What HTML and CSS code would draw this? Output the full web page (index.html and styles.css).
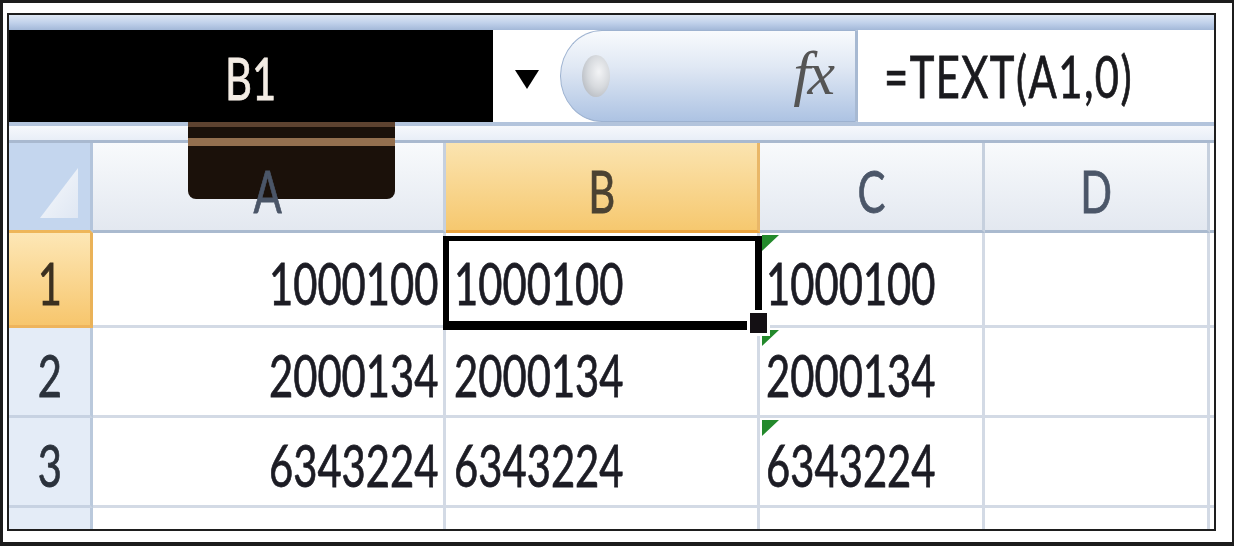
FILE: index.html
```html
<!DOCTYPE html>
<html lang="en">
<head>
<meta charset="utf-8">
<title>Excel TEXT function</title>
<link rel="stylesheet" href="styles.css">
</head>
<body>
<div class="outer">
  <div class="frame">
    <div class="topbar"></div>
    <div class="fbar">
      <div class="namebox"><span class="t tc">B1</span></div>
      <div class="dd"><span class="arrow"></span></div>
      <div class="pill">
        <span class="dot"></span>
        <span class="fx">fx</span>
      </div>
      <div class="formula"><span class="t tl">=TEXT(A1,0)</span></div>
    </div>
    <div class="sep"></div>
    <div class="sheet">
      <div class="c corner"><svg class="tri" width="81" height="87" viewBox="0 0 81 87"><defs><linearGradient id="g" x1="0" y1="0" x2="1" y2="1"><stop offset="0" stop-color="#f7f9fc"/><stop offset="1" stop-color="#dfe7f3"/></linearGradient></defs><polygon points="69,25 69,75 31,75" fill="url(#g)"/></svg></div>
      <div class="c colh"><span class="t tc top">A</span></div>
      <div class="c colh sel"><span class="t tc">B</span></div>
      <div class="c colh"><span class="t tc">C</span></div>
      <div class="c colh"><span class="t tc">D</span></div>
      <div class="c colh pad"></div>

      <div class="c rowh sel"><span class="t tc">1</span></div>
      <div class="c num"><span class="t tr">1000100</span></div>
      <div class="c txt"><span class="t tl">1000100</span></div>
      <div class="c txt ctxt"><i class="err"></i><span class="t tl">1000100</span></div>
      <div class="c"></div>
      <div class="c pad"></div>

      <div class="c rowh"><span class="t tc">2</span></div>
      <div class="c num"><span class="t tr">2000134</span></div>
      <div class="c txt"><span class="t tl">2000134</span></div>
      <div class="c txt ctxt"><i class="err"></i><span class="t tl">2000134</span></div>
      <div class="c"></div>
      <div class="c pad"></div>

      <div class="c rowh"><span class="t tc">3</span></div>
      <div class="c num"><span class="t tr">6343224</span></div>
      <div class="c txt"><span class="t tl">6343224</span></div>
      <div class="c txt ctxt"><i class="err"></i><span class="t tl">6343224</span></div>
      <div class="c"></div>
      <div class="c pad"></div>

      <div class="c rowh last"></div>
      <div class="c last"></div>
      <div class="c last"></div>
      <div class="c last"></div>
      <div class="c last"></div>
      <div class="c pad last"></div>

      <div class="selbox"><i class="handle"></i></div>
    </div>
    <div class="tip"></div>
  </div>
</div>
</body>
</html>
```

FILE: styles.css
```css
* { box-sizing: border-box; margin: 0; padding: 0; }
html, body { width: 1234px; height: 546px; overflow: hidden; background: #fff; }
body { font-family: Lato, "Open Sans", sans-serif; }

.outer {
  width: 1234px; height: 546px;
  border-style: solid; border-color: #1c1c1c;
  border-width: 3px 2px 4px 3px;
  padding: 10px 0 0 4px;
}
.frame {
  position: relative;
  width: 1209px; height: 518px;
  border: 2px solid #1e1e1e;
  display: flex; flex-direction: column;
  background: #fff;
}
.topbar { height: 15px; flex: none; background: linear-gradient(#dfe8f5, #bfd0ea 55%, #a3b8d8); }

.fbar { height: 92px; flex: none; display: flex; }
.namebox {
  flex: none; width: 484px; background: #000; color: #f3ece4;
  display: flex; align-items: center; justify-content: center;
  font-size: 58px; padding-top: 3px;
}
.dd { flex: none; width: 67px; background: #fff; display: flex; align-items: center; justify-content: center; padding-top: 6px; }
.arrow { width: 0; height: 0; border-left: 12px solid transparent; border-right: 12px solid transparent; border-top: 19px solid #000; }
.pill {
  flex: none; width: 298px;
  display: flex; align-items: center; justify-content: space-between;
  padding: 0 23px 0 21px;
  background: linear-gradient(#f8fafd, #e0e8f4 40%, #adc3e3);
  border: 1px solid #9db2d0; border-right: 3px solid #a7b9d2;
  border-radius: 42px 0 0 42px / 46px 0 0 46px;
}
.dot {
  width: 28px; height: 42px; border-radius: 50%;
  background: radial-gradient(ellipse at 60% 40%, #f3f4f6 0%, #d7dade 45%, #a6abb3 100%);
}
.fx {
  font-family: "Liberation Serif", serif; font-style: italic;
  font-size: 62px; line-height: 1; color: #555555;
  padding-bottom: 6px; letter-spacing: -3px;
}
.formula {
  flex: 1 1 0; min-width: 0; background: #fff; color: #1a1a1e;
  display: flex; align-items: center;
  font-size: 58px; padding-left: 26px; letter-spacing: 2px;
}

.sep { height: 21px; flex: none; border-top: 4px solid #b3c4dc; border-bottom: 3px solid #a9b9cf; background: linear-gradient(#f6f8fc, #e8eef7); }

.sheet {
  position: relative; flex: none; height: 386px;
  display: grid;
  grid-template-columns: 84px 353px 314px 225px 225px 4px;
  grid-template-rows: 90px 95px 90px 90px 21px;
  color: #1c1c24;
}
.c {
  position: relative;
  display: flex; align-items: center;
  font-size: 58px; padding-top: 7px;
  border-right: 3px solid #d3dae5; border-bottom: 3px solid #d3dae5;
  white-space: nowrap;
}
.c.last { border-bottom: none; }
.c.pad { border-right: none; }

.t { display: inline-block; flex: none; transform: scaleX(0.72); line-height: 1.2; -webkit-text-stroke: 0.8px currentColor; }
.tc { transform-origin: center; }
.tl { transform-origin: left center; }
.tr { transform-origin: right center; }
.top { position: relative; z-index: 3; }

.corner { background: #c4d6ee; border-right-color: #b3c4db; border-bottom-color: #eeb65a; }
.tri { position: absolute; left: 0; top: 0; }

.colh { justify-content: center; background: linear-gradient(#f8fafc, #e3e8f0); border-right-color: #c6d0de; border-bottom-color: #aabacf; color: #4b5668; padding-top: 9px; }
.colh.sel { background: linear-gradient(#fbe4b0, #f6c86f); border-bottom-color: #eaa43f; border-right-color: #e9b768; color: #4b4232; }
.colh.pad { background: #fff; }

.rowh { justify-content: center; background: #e4ecf7; border-right-color: #bac9dc; border-bottom-color: #c7d2e2; color: #2b323c; }
.rowh.sel { background: linear-gradient(#fde7b6, #f7c66d); border-right-color: #eab258; border-bottom-color: #eeb45c; color: #3b3020; }

.num { justify-content: flex-end; padding-right: 5px; }
.txt { justify-content: flex-start; padding-left: 8px; }
.ctxt { padding-left: 6px; }

.err {
  position: absolute; left: 2px; top: 2px;
  width: 17px; height: 16px;
  background: #23892b;
  clip-path: polygon(0 0, 100% 0, 0 100%);
}

.selbox {
  position: absolute; left: 434px; top: 93px;
  width: 319px; height: 94px;
  border-style: solid; border-color: #000;
  border-width: 5px 7px 9px 6px;
}
.handle {
  position: absolute; right: -15px; bottom: -15px;
  width: 23px; height: 26px;
  background: #141014; border: 3px solid #fff;
}

.tip {
  position: absolute; left: 179px; top: 107px; z-index: 2;
  width: 207px; height: 77px;
  border-radius: 0 0 8px 8px;
  background: linear-gradient(#5e4330 0, #5e4330 5px, #1b110a 5px, #1b110a 16px, #94704f 16px, #94704f 24px, #1b110a 24px);
}
```
